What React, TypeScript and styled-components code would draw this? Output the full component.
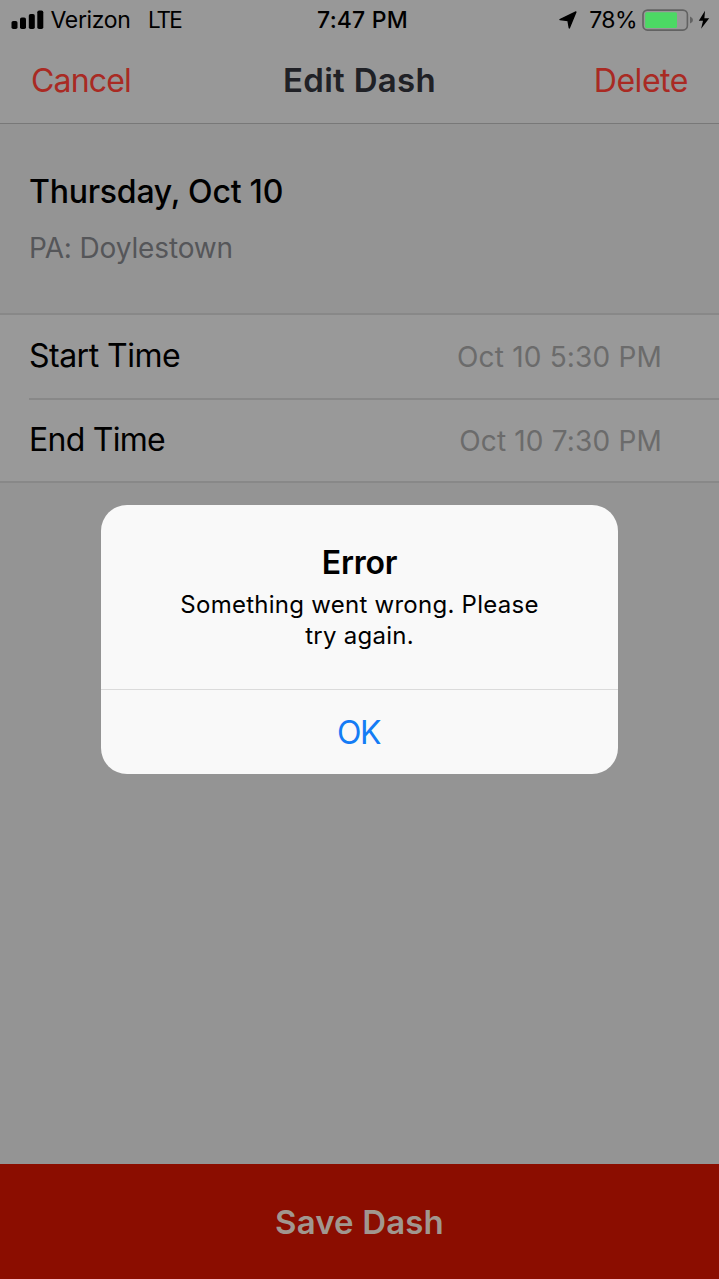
import React from "react";
import styled, { createGlobalStyle } from "styled-components";

const GlobalStyle = createGlobalStyle`
  * { box-sizing: border-box; }
  body {
    margin: 0;
    background: #949494;
    font-family: Inter, "Liberation Sans", sans-serif;
  }
  button {
    font: inherit;
    border: 0;
    padding: 0;
    background: none;
  }
`;

const Screen = styled.div`
  display: flex;
  flex-direction: column;
  width: 719px;
  height: 1279px;
  overflow: hidden;
  background: #949494;
  color: #000;
`;

const Header = styled.header`
  background: #989898;
  border-bottom: 1px solid #787878;
`;

const StatusBar = styled.div`
  display: grid;
  grid-template-columns: 1fr auto 1fr;
  align-items: center;
  height: 39px;
  padding: 0 9px 0 11px;
  font-size: 23px;
  line-height: 28px;
  white-space: pre;
`;

const StatusGroup = styled.div<{ $end?: boolean }>`
  display: flex;
  align-items: center;
  justify-content: ${(p) => (p.$end ? "flex-end" : "flex-start")};
`;

const Carrier = styled.span`
  margin-left: 6.5px;
  letter-spacing: -0.36px;
`;

const Network = styled.span`
  margin-left: 17.5px;
  font-size: 22.5px;
  letter-spacing: -1.9px;
`;

const Clock = styled.time`
  font-weight: 550;
  letter-spacing: 0.2px;
  margin-left: 4px;
`;

const Percent = styled.span`
  margin: 0 5px 0 12px;
  letter-spacing: -0.6px;
`;

const NavBar = styled.nav`
  display: grid;
  grid-template-columns: 1fr auto 1fr;
  align-items: center;
  height: 84px;
  padding: 0 31px;
`;

const NavButton = styled.button<{ $end?: boolean }>`
  justify-self: ${(p) => (p.$end ? "end" : "start")};
  font-size: 32px;
  line-height: 40px;
  letter-spacing: ${(p) => (p.$end ? "-0.46px" : "-0.84px")};
  color: #a92a23;
`;

const Title = styled.h1`
  margin: 0 0 2px;
  font-size: 33px;
  line-height: 40px;
  font-weight: 600;
  letter-spacing: 0.3px;
  color: #202126;
`;

const Summary = styled.section`
  height: 191px;
  padding: 48px 29px 0;
  border-bottom: 2px solid #888;
`;

const DateHeading = styled.h2`
  margin: 0;
  font-size: 32px;
  line-height: 40px;
  font-weight: 500;
  letter-spacing: -0.23px;
`;

const Place = styled.p`
  margin: 18px 0 0;
  font-size: 28px;
  line-height: 36px;
  letter-spacing: -0.14px;
  color: #555659;
`;

const TimeList = styled.section`
  background: #999;
  border-bottom: 2px solid #888;
`;

const TimeRow = styled.div<{ $divided?: boolean }>`
  display: flex;
  align-items: center;
  justify-content: space-between;
  height: ${(p) => (p.$divided ? 85 : 81)}px;
  margin-left: 29px;
  padding-right: 57px;
  border-bottom: ${(p) => (p.$divided ? "2px solid #888" : "0")};
`;

const Label = styled.span<{ $tracking: number }>`
  padding-bottom: 1px;
  font-size: 32px;
  line-height: 40px;
  letter-spacing: ${(p) => p.$tracking}px;
`;

const Value = styled.span`
  padding-top: 1px;
  font-size: 28px;
  line-height: 36px;
  letter-spacing: 0.18px;
  color: #6b6b6b;
`;

const SaveButton = styled.button`
  height: 115px;
  margin-top: auto;
  background: #8b0d00;
  color: #a1978f;
  font-size: 33px;
  font-weight: 600;
  letter-spacing: 0.15px;
`;

const Overlay = styled.div`
  position: absolute;
  top: 0;
  left: 0;
  width: 719px;
  height: 1279px;
  display: flex;
  align-items: center;
  justify-content: center;
`;

const Alert = styled.div`
  display: flex;
  flex-direction: column;
  width: 517px;
  height: 269px;
  border-radius: 26px;
  background: #f9f9f9;
  overflow: hidden;
  text-align: center;
`;

const AlertBody = styled.div`
  height: 185px;
  padding: 38px 70px 0;
  border-bottom: 1px solid #dbdbdb;
`;

const AlertTitle = styled.h2`
  margin: 0;
  font-size: 32px;
  line-height: 40px;
  font-weight: 600;
  letter-spacing: -0.22px;
`;

const AlertMessage = styled.p`
  margin: 5.5px 0 0;
  font-size: 24px;
  line-height: 31px;
  letter-spacing: 0.26px;
`;

const AlertAction = styled.button`
  flex: 1;
  padding-right: 2px;
  font-size: 32px;
  letter-spacing: -1.5px;
  color: #147cf5;
`;

const SignalIcon = () => (
  <svg width="33" height="20" viewBox="0 0 33 20" aria-hidden="true">
    <rect x="0.5" y="11" width="6" height="8" rx="1.8" />
    <rect x="9" y="7.5" width="6" height="11.5" rx="1.8" />
    <rect x="17.8" y="4" width="6" height="15" rx="1.8" />
    <rect x="26.3" y="0.5" width="6" height="18.5" rx="1.8" />
  </svg>
);

const LocationIcon = () => (
  <svg width="18" height="18" viewBox="0 0 18 18" aria-hidden="true">
    <path d="M16.9 1 L10.3 16.9 L9 9.6 L1 8.6 Z" stroke="#000" strokeWidth="1.4" strokeLinejoin="round" />
  </svg>
);

const BatteryIcon = () => (
  <svg width="68" height="24" viewBox="0 0 68 24" aria-hidden="true">
    <rect x="1" y="2.1" width="44.4" height="20" rx="4.5" fill="none" stroke="#626262" strokeWidth="1.6" />
    <rect x="3.2" y="4.3" width="31.8" height="15.6" rx="1.5" fill="#4cd964" />
    <path d="M48 8.4 Q51 9.6 51 12 Q51 14.4 48 15.6 Z" fill="#626262" />
    <path d="M63 2.8 L56.8 12.8 H61 L59.1 20.8 L67.2 10.2 H62.4 Z" />
  </svg>
);

export default function App() {
  return (
    <>
      <GlobalStyle />
      <Screen>
        <Header>
          <StatusBar>
            <StatusGroup>
              <SignalIcon />
              <Carrier>Verizon</Carrier>
              <Network>LTE</Network>
            </StatusGroup>
            <Clock>7:47 PM</Clock>
            <StatusGroup $end>
              <LocationIcon />
              <Percent>78%</Percent>
              <BatteryIcon />
            </StatusGroup>
          </StatusBar>
          <NavBar>
            <NavButton>Cancel</NavButton>
            <Title>Edit Dash</Title>
            <NavButton $end>Delete</NavButton>
          </NavBar>
        </Header>
        <Summary>
          <DateHeading>Thursday, Oct 10</DateHeading>
          <Place>PA: Doylestown</Place>
        </Summary>
        <TimeList>
          <TimeRow $divided>
            <Label $tracking={-0.51}>Start Time</Label>
            <Value>Oct 10 5:30 PM</Value>
          </TimeRow>
          <TimeRow>
            <Label $tracking={-0.74}>End Time</Label>
            <Value>Oct 10 7:30 PM</Value>
          </TimeRow>
        </TimeList>
        <SaveButton>Save Dash</SaveButton>
      </Screen>
      <Overlay>
        <Alert role="alertdialog">
          <AlertBody>
            <AlertTitle>Error</AlertTitle>
            <AlertMessage>Something went wrong. Please try again.</AlertMessage>
          </AlertBody>
          <AlertAction>OK</AlertAction>
        </Alert>
      </Overlay>
    </>
  );
}
